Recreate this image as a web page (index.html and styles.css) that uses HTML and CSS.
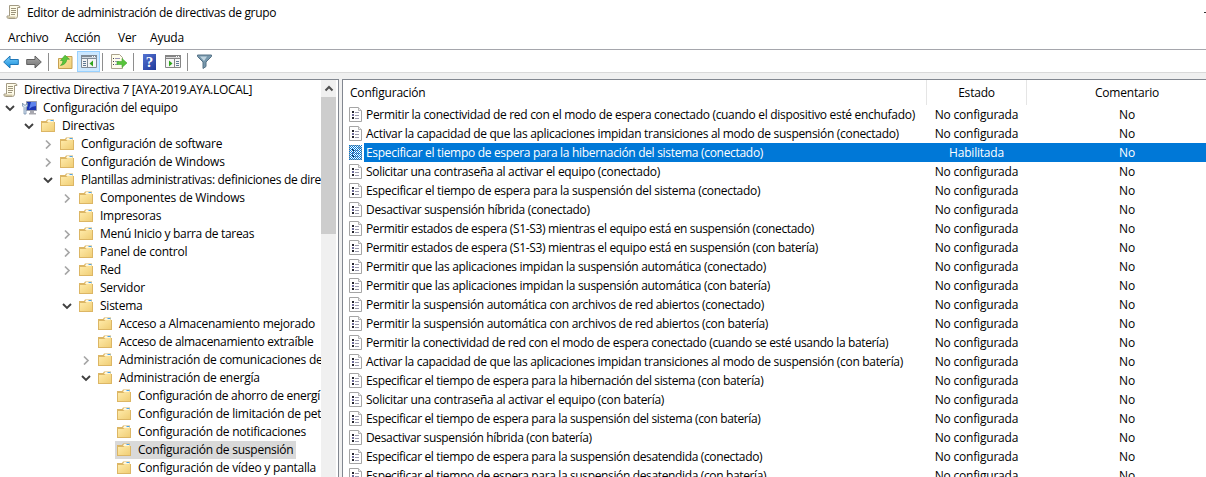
FILE: index.html
```html
<!DOCTYPE html>
<html lang="es">
<head>
<meta charset="utf-8">
<title>Editor de administración de directivas de grupo</title>
<link rel="stylesheet" href="styles.css">
</head>
<body>
<svg class="defs" width="0" height="0" aria-hidden="true">
  <defs>
    <linearGradient id="gFolder" x1="0" y1="0" x2="1" y2="1"><stop offset="0" stop-color="#ffebaa"/><stop offset="1" stop-color="#f0ce76"/></linearGradient>
    <linearGradient id="gBlue" x1="0" y1="0" x2="0" y2="1"><stop offset="0" stop-color="#7fd0fa"/><stop offset="1" stop-color="#158ddb"/></linearGradient>
    <linearGradient id="gGray" x1="0" y1="0" x2="0" y2="1"><stop offset="0" stop-color="#aaa"/><stop offset="1" stop-color="#747474"/></linearGradient>
    <pattern id="pSel" width="2" height="2" patternUnits="userSpaceOnUse"><path fill="#0078d7" shape-rendering="crispEdges" d="M0 0h1v1H0zM1 1h1v1H1z"/></pattern>
    <symbol id="folder" viewBox="0 0 16 16"><path d="M0 3h5l1-1.500h7V4h1v10H0z" fill="#dcb665"/><path d="M7 2h5.500v2H6z" fill="#fff7dc"/><path d="M9.500 2h3v1h-3z" fill="#4ba3ea"/><path d="M1 5h5.500l1-1H13v9H1z" fill="url(#gFolder)"/></symbol>
    <symbol id="scroll" viewBox="0 0 16 16"><path d="M3.500 1.500h8.500q2 0 2 2h-2.500v8.500q0 2.500-2 2.500h-7q-2 0-1.500-2.500h2.500z" fill="#fffce9" stroke="#a39b84"/><path d="M2 12.500h7.500v1.500H2z" fill="#cfc5a4"/><path d="M5 4.500h5M5 6.500h5M5 8.500h5M5 10.500h4" stroke="#9c947c"/></symbol>
    <symbol id="setting" viewBox="0 0 13 15"><path d="M.5.5h9l3 3v11H.5z" fill="#fff" stroke="#a5a5a5"/><path d="M9.500.5v3h3" fill="#eee" stroke="#b5b5b5"/><path d="M3 4h2v2H3zM3 10h2v2H3z" fill="#25252f"/><path d="M3 7h2v2H3z" fill="#6d6a99"/><path d="M6 5.500h4M6 8.500h4M6 11.500h4" stroke="#9c9cae"/></symbol>
    <symbol id="open" viewBox="0 0 10 10"><path d="M1 3l4 4 4-4" fill="none" stroke="#404040" stroke-width="1.900"/></symbol>
    <symbol id="closed" viewBox="0 0 10 10"><path d="M3 1.500l4 4-4 4" fill="none" stroke="#a6a6a6" stroke-width="1.700"/></symbol>
  </defs>
</svg>
<div class="window">
  <header class="titlebar"><svg class="i16"><use href="#scroll"/></svg><span>Editor de administración de directivas de grupo</span><i class="minimize"></i></header>
  <nav class="menu"><span class="m1">Archivo</span><span class="m2">Acción</span><span class="m3">Ver</span><span class="m4">Ayuda</span></nav>
  <div class="toolbar">
    <svg class="t-back" width="16" height="14" viewBox="0 0 16 14"><path d="M.7 7L7 1v3.500h8.300v5H7V13z" fill="url(#gBlue)" stroke="#1e77b7"/></svg>
    <svg class="t-next" width="16" height="14" viewBox="0 0 16 14"><path d="M15.300 7L9 1v3.500H.7v5H9V13z" fill="url(#gGray)" stroke="#606060"/></svg>
    <i class="sep s1"></i>
    <svg class="t-up" width="15" height="16" viewBox="0 0 15 16"><path d="M.5 4.500h7l1-2h5.500v12H.5z" fill="url(#gFolder)" stroke="#c5a052"/><path d="M2.500 11.500q2.500-2 2.500-5H2.500L7 1.200l4.500 4H8.800q-.5 5.500-6.300 6.300z" fill="#5cc53b" stroke="#359d27" stroke-width=".6"/></svg>
    <span class="pressed"><svg width="16" height="13" viewBox="0 0 16 13"><path d="M.5.5h15v12H.5z" fill="#f4f4f4" stroke="#808b95"/><path d="M0 0h16v4H0z" fill="#808b95"/><path d="M1 2.500h14" stroke="#d4dce2"/><path d="M11 1h1v1h-1zM13 1h1v1h-1z" fill="#fff"/><path d="M6.500 4v9" stroke="#808b95"/><path d="M2 6.500h3M2 8.500h3M2 10.500h3" stroke="#5e7892"/><path d="M12 5.500v6L8.500 8.500z" fill="#2fa51d"/></svg></span>
    <i class="sep s2"></i>
    <svg class="t-export" width="17" height="16" viewBox="0 0 17 16"><path d="M.5.5h8l3 3v11H.5z" fill="#fffdec" stroke="#aaa38d"/><path d="M2 4.500h1M2 7.500h1M2 10.500h1" stroke="#444"/><path d="M4 4.500h5M4 7.500h4M4 10.500h3" stroke="#9994b5"/><path d="M6 7.500h5V4.500l5 4.500-5 4.500v-3H6z" fill="#58c53b" stroke="#48a834" stroke-width=".6"/></svg>
    <i class="sep s3"></i>
    <span class="help">?</span>
    <svg class="t-pane" width="16" height="13" viewBox="0 0 16 13"><path d="M.5.5h15v12H.5z" fill="#f6f6f6" stroke="#858585"/><path d="M0 0h16v4H0z" fill="#858585"/><path d="M1 2.500h14" stroke="#ddd"/><path d="M11 1h1v1h-1zM13 1h1v1h-1z" fill="#fff"/><path d="M9.500 4v9" stroke="#858585"/><path d="M11 6.500h3M11 8.500h3M11 10.500h3" stroke="#5e7892"/><path d="M4 5.500v6l3.500-3z" fill="#2fa51d"/></svg>
    <i class="sep s4"></i>
    <svg class="t-filter" width="15" height="15" viewBox="0 0 15 15"><path d="M.5 1h14v1.500L9 8v4.500L6 14.500V8L.5 2.500z" fill="#7798ad" stroke="#567286"/><path d="M3 2.500h7L7 7z" fill="#c0d4df"/></svg>
  </div>
  <main class="panes">
    <section class="tree">
      <div class="nodes">
        <div class="node l0"><svg class="i16"><use href="#scroll"/></svg><span class="root">Directiva Directiva 7 [AYA-2019.AYA.LOCAL]</span></div>
        <div class="node l1"><svg class="chev"><use href="#open"/></svg><svg class="i16" viewBox="0 0 16 16"><path d="M4.500 1.500h10v9h-10z" fill="#1b36b5" stroke="#999caa"/><path d="M9 2h5v4q-4 0-7 3z" fill="#5e83ed"/><path d="M8 11h4v2h2v1.500H7V13h1z" fill="#a8a8af"/><path d="M.5 3v3l1.500 1.500V14h2V7.500L5.500 6V3L4 5H2z" fill="#d9e6f2" stroke="#7791ad" stroke-width=".8"/></svg><span>Configuración del equipo</span></div>
        <div class="node l2"><svg class="chev"><use href="#open"/></svg><svg class="i16"><use href="#folder"/></svg><span>Directivas</span></div>
        <div class="node l3"><svg class="chev"><use href="#closed"/></svg><svg class="i16"><use href="#folder"/></svg><span>Configuración de software</span></div>
        <div class="node l3"><svg class="chev"><use href="#closed"/></svg><svg class="i16"><use href="#folder"/></svg><span>Configuración de Windows</span></div>
        <div class="node l3"><svg class="chev"><use href="#open"/></svg><svg class="i16"><use href="#folder"/></svg><span class="long">Plantillas administrativas: definiciones de dire</span></div>
        <div class="node l4"><svg class="chev"><use href="#closed"/></svg><svg class="i16"><use href="#folder"/></svg><span>Componentes de Windows</span></div>
        <div class="node l4"><svg class="chev"></svg><svg class="i16"><use href="#folder"/></svg><span>Impresoras</span></div>
        <div class="node l4"><svg class="chev"><use href="#closed"/></svg><svg class="i16"><use href="#folder"/></svg><span class="long">Menú Inicio y barra de tareas</span></div>
        <div class="node l4"><svg class="chev"><use href="#closed"/></svg><svg class="i16"><use href="#folder"/></svg><span>Panel de control</span></div>
        <div class="node l4"><svg class="chev"><use href="#closed"/></svg><svg class="i16"><use href="#folder"/></svg><span>Red</span></div>
        <div class="node l4"><svg class="chev"></svg><svg class="i16"><use href="#folder"/></svg><span>Servidor</span></div>
        <div class="node l4"><svg class="chev"><use href="#open"/></svg><svg class="i16"><use href="#folder"/></svg><span>Sistema</span></div>
        <div class="node l5"><svg class="chev"></svg><svg class="i16"><use href="#folder"/></svg><span>Acceso a Almacenamiento mejorado</span></div>
        <div class="node l5"><svg class="chev"></svg><svg class="i16"><use href="#folder"/></svg><span class="long">Acceso de almacenamiento extraíble</span></div>
        <div class="node l5"><svg class="chev"><use href="#closed"/></svg><svg class="i16"><use href="#folder"/></svg><span>Administración de comunicaciones de</span></div>
        <div class="node l5"><svg class="chev"><use href="#open"/></svg><svg class="i16"><use href="#folder"/></svg><span>Administración de energía</span></div>
        <div class="node l6"><svg class="chev"></svg><svg class="i16"><use href="#folder"/></svg><span class="long">Configuración de ahorro de energí</span></div>
        <div class="node l6"><svg class="chev"></svg><svg class="i16"><use href="#folder"/></svg><span>Configuración de limitación de pet</span></div>
        <div class="node l6"><svg class="chev"></svg><svg class="i16"><use href="#folder"/></svg><span>Configuración de notificaciones</span></div>
        <div class="node l6"><svg class="chev"></svg><span class="current"><svg class="i16"><use href="#folder"/></svg><span>Configuración de suspensión</span></span></div>
        <div class="node l6"><svg class="chev"></svg><svg class="i16"><use href="#folder"/></svg><span>Configuración de vídeo y pantalla</span></div>
      </div>
      <div class="scrollbar"><svg width="16" height="17" viewBox="0 0 16 17"><path d="M4.500 10.500L8 7l3.500 3.500" fill="none" stroke="#505050" stroke-width="2"/></svg><i class="thumb"></i></div>
    </section>
    <section class="list">
      <div class="head"><span class="c1">Configuración</span><span class="c2">Estado</span><span class="c3">Comentario</span></div>
      <div class="row"><svg class="doc"><use href="#setting"/></svg><span class="name">Permitir la conectividad de red con el modo de espera conectado (cuando el dispositivo esté enchufado)</span><span class="state">No configurada</span><span class="note">No</span></div>
      <div class="row"><svg class="doc"><use href="#setting"/></svg><span class="name">Activar la capacidad de que las aplicaciones impidan transiciones al modo de suspensión (conectado)</span><span class="state">No configurada</span><span class="note">No</span></div>
      <div class="row selected"><svg class="doc"><use href="#setting"/><rect width="13" height="15" fill="url(#pSel)"/></svg><span class="name">Especificar el tiempo de espera para la hibernación del sistema (conectado)</span><span class="state">Habilitada</span><span class="note">No</span></div>
      <div class="row"><svg class="doc"><use href="#setting"/></svg><span class="name">Solicitar una contraseña al activar el equipo (conectado)</span><span class="state">No configurada</span><span class="note">No</span></div>
      <div class="row"><svg class="doc"><use href="#setting"/></svg><span class="name">Especificar el tiempo de espera para la suspensión del sistema (conectado)</span><span class="state">No configurada</span><span class="note">No</span></div>
      <div class="row"><svg class="doc"><use href="#setting"/></svg><span class="name">Desactivar suspensión híbrida (conectado)</span><span class="state">No configurada</span><span class="note">No</span></div>
      <div class="row"><svg class="doc"><use href="#setting"/></svg><span class="name tight">Permitir estados de espera (S1-S3) mientras el equipo está en suspensión (conectado)</span><span class="state">No configurada</span><span class="note">No</span></div>
      <div class="row"><svg class="doc"><use href="#setting"/></svg><span class="name tight">Permitir estados de espera (S1-S3) mientras el equipo está en suspensión (con batería)</span><span class="state">No configurada</span><span class="note">No</span></div>
      <div class="row"><svg class="doc"><use href="#setting"/></svg><span class="name">Permitir que las aplicaciones impidan la suspensión automática (conectado)</span><span class="state">No configurada</span><span class="note">No</span></div>
      <div class="row"><svg class="doc"><use href="#setting"/></svg><span class="name">Permitir que las aplicaciones impidan la suspensión automática (con batería)</span><span class="state">No configurada</span><span class="note">No</span></div>
      <div class="row"><svg class="doc"><use href="#setting"/></svg><span class="name">Permitir la suspensión automática con archivos de red abiertos (conectado)</span><span class="state">No configurada</span><span class="note">No</span></div>
      <div class="row"><svg class="doc"><use href="#setting"/></svg><span class="name">Permitir la suspensión automática con archivos de red abiertos (con batería)</span><span class="state">No configurada</span><span class="note">No</span></div>
      <div class="row"><svg class="doc"><use href="#setting"/></svg><span class="name tight">Permitir la conectividad de red con el modo de espera conectado (cuando se esté usando la batería)</span><span class="state">No configurada</span><span class="note">No</span></div>
      <div class="row"><svg class="doc"><use href="#setting"/></svg><span class="name">Activar la capacidad de que las aplicaciones impidan transiciones al modo de suspensión (con batería)</span><span class="state">No configurada</span><span class="note">No</span></div>
      <div class="row"><svg class="doc"><use href="#setting"/></svg><span class="name tight">Especificar el tiempo de espera para la hibernación del sistema (con batería)</span><span class="state">No configurada</span><span class="note">No</span></div>
      <div class="row"><svg class="doc"><use href="#setting"/></svg><span class="name">Solicitar una contraseña al activar el equipo (con batería)</span><span class="state">No configurada</span><span class="note">No</span></div>
      <div class="row"><svg class="doc"><use href="#setting"/></svg><span class="name tight">Especificar el tiempo de espera para la suspensión del sistema (con batería)</span><span class="state">No configurada</span><span class="note">No</span></div>
      <div class="row"><svg class="doc"><use href="#setting"/></svg><span class="name tight">Desactivar suspensión híbrida (con batería)</span><span class="state">No configurada</span><span class="note">No</span></div>
      <div class="row"><svg class="doc"><use href="#setting"/></svg><span class="name tight">Especificar el tiempo de espera para la suspensión desatendida (conectado)</span><span class="state">No configurada</span><span class="note">No</span></div>
      <div class="row"><svg class="doc"><use href="#setting"/></svg><span class="name tight">Especificar el tiempo de espera para la suspensión desatendida (con batería)</span><span class="state">No configurada</span><span class="note">No</span></div>
    </section>
  </main>
</div>
</body>
</html>
```
FILE: styles.css
```css
* { box-sizing: border-box; }
body { margin: 0; overflow: hidden; font: 12px "Open Sans", "Noto Sans", sans-serif; letter-spacing: -0.2px; color: #000; }
svg { display: block; flex: none; }
.defs { position: absolute; }
.window { width: 1206px; height: 477px; display: flex; flex-direction: column; overflow: hidden; background: #fff; white-space: nowrap; }
.i16 { width: 16px; height: 16px; }
.titlebar { height: 24px; flex: none; display: flex; align-items: center; padding-left: 6px; gap: 5px; letter-spacing: -0.33px; }
.minimize { width: 2px; height: 1px; margin-left: auto; background: #333; }
.menu { height: 25px; flex: none; display: flex; align-items: center; padding: 2px 0 0 8px; }
.m1 { width: 57px; }
.m2 { width: 53px; }
.m3 { width: 32px; }
.toolbar { height: 24px; flex: none; display: flex; align-items: center; padding: 1px 0 0 3px; border-top: 1px solid #a5a6ac; border-bottom: 1px solid #d9d9d9; }
.t-next { margin-left: 7px; }
.sep { width: 1px; height: 18px; background: #8e8e8e; }
.s1 { margin-left: 6px; }
.t-up { margin-left: 9px; }
.pressed { width: 23px; height: 21px; margin-left: 4px; display: grid; place-items: center; background: #cce8ff; border: 1px solid #99d1ff; }
.s2 { margin-left: 2px; }
.t-export { margin-left: 8px; }
.s3 { margin-left: 5px; }
.help { width: 13px; height: 16px; margin-left: 9px; background: linear-gradient(135deg, #5474d2, #203999); color: #fff; font: 700 15px/16px "Liberation Serif", serif; text-align: center; letter-spacing: 0; }
.t-pane { margin-left: 9px; }
.s4 { margin-left: 6px; }
.t-filter { margin-left: 9px; }
.panes { flex: 1; min-height: 0; display: flex; gap: 3px; padding-top: 6px; background: #f0f0f0; }
.tree { width: 339px; flex: none; display: flex; border: solid #828790; border-width: 1px 1px 0 0; background: #fff; overflow: hidden; }
.nodes { width: 321px; flex: none; overflow: hidden; padding-top: 1px; letter-spacing: -0.24px; }
.node { height: 18px; display: flex; align-items: center; line-height: 16px; }
.node > span, .current > span { padding-bottom: 1px; }
.node .i16 { margin-right: 5px; }
.root { letter-spacing: -0.3px; }
.long { letter-spacing: -0.31px; }
.chev { width: 10px; height: 10px; margin-right: 7px; }
.l0 { padding-left: 3px; }
.l1 { padding-left: 5px; }
.l2 { padding-left: 24px; }
.l3 { padding-left: 43px; }
.l4 { padding-left: 62px; }
.l5 { padding-left: 81px; }
.l6 { padding-left: 100px; }
.node > .current { height: 18px; width: 181px; margin-left: -2px; padding: 0 0 0 2px; display: flex; align-items: center; background: #d9d9d9; }
.scrollbar { width: 15px; background: #f0f0f0; }
.thumb { display: block; width: 15px; height: 137px; background: #cdcdcd; }
.list { flex: 1; border: solid #828790; border-width: 1px 0 0 1px; background: #fff; overflow: hidden; }
.head { height: 25px; display: flex; line-height: 25px; }
.c1, .c2 { flex: none; border-right: 1px solid #e5e5e5; }
.c1 { width: 584px; padding-left: 7px; }
.c2 { width: 100px; text-align: center; }
.c3 { flex: 1; padding-left: 21px; text-align: center; }
.row { height: 19px; display: flex; align-items: center; line-height: 19px; }
.doc { width: 13px; height: 15px; margin: 0 2px 0 6px; }
.name { width: 562px; flex: none; padding-left: 2px; letter-spacing: -0.31px; }
.tight { letter-spacing: -0.36px; }
.state { width: 101px; flex: none; text-align: center; }
.note { flex: 1; padding-left: 21px; text-align: center; }
.selected span { background: #0078d7; color: #fff; }
```
